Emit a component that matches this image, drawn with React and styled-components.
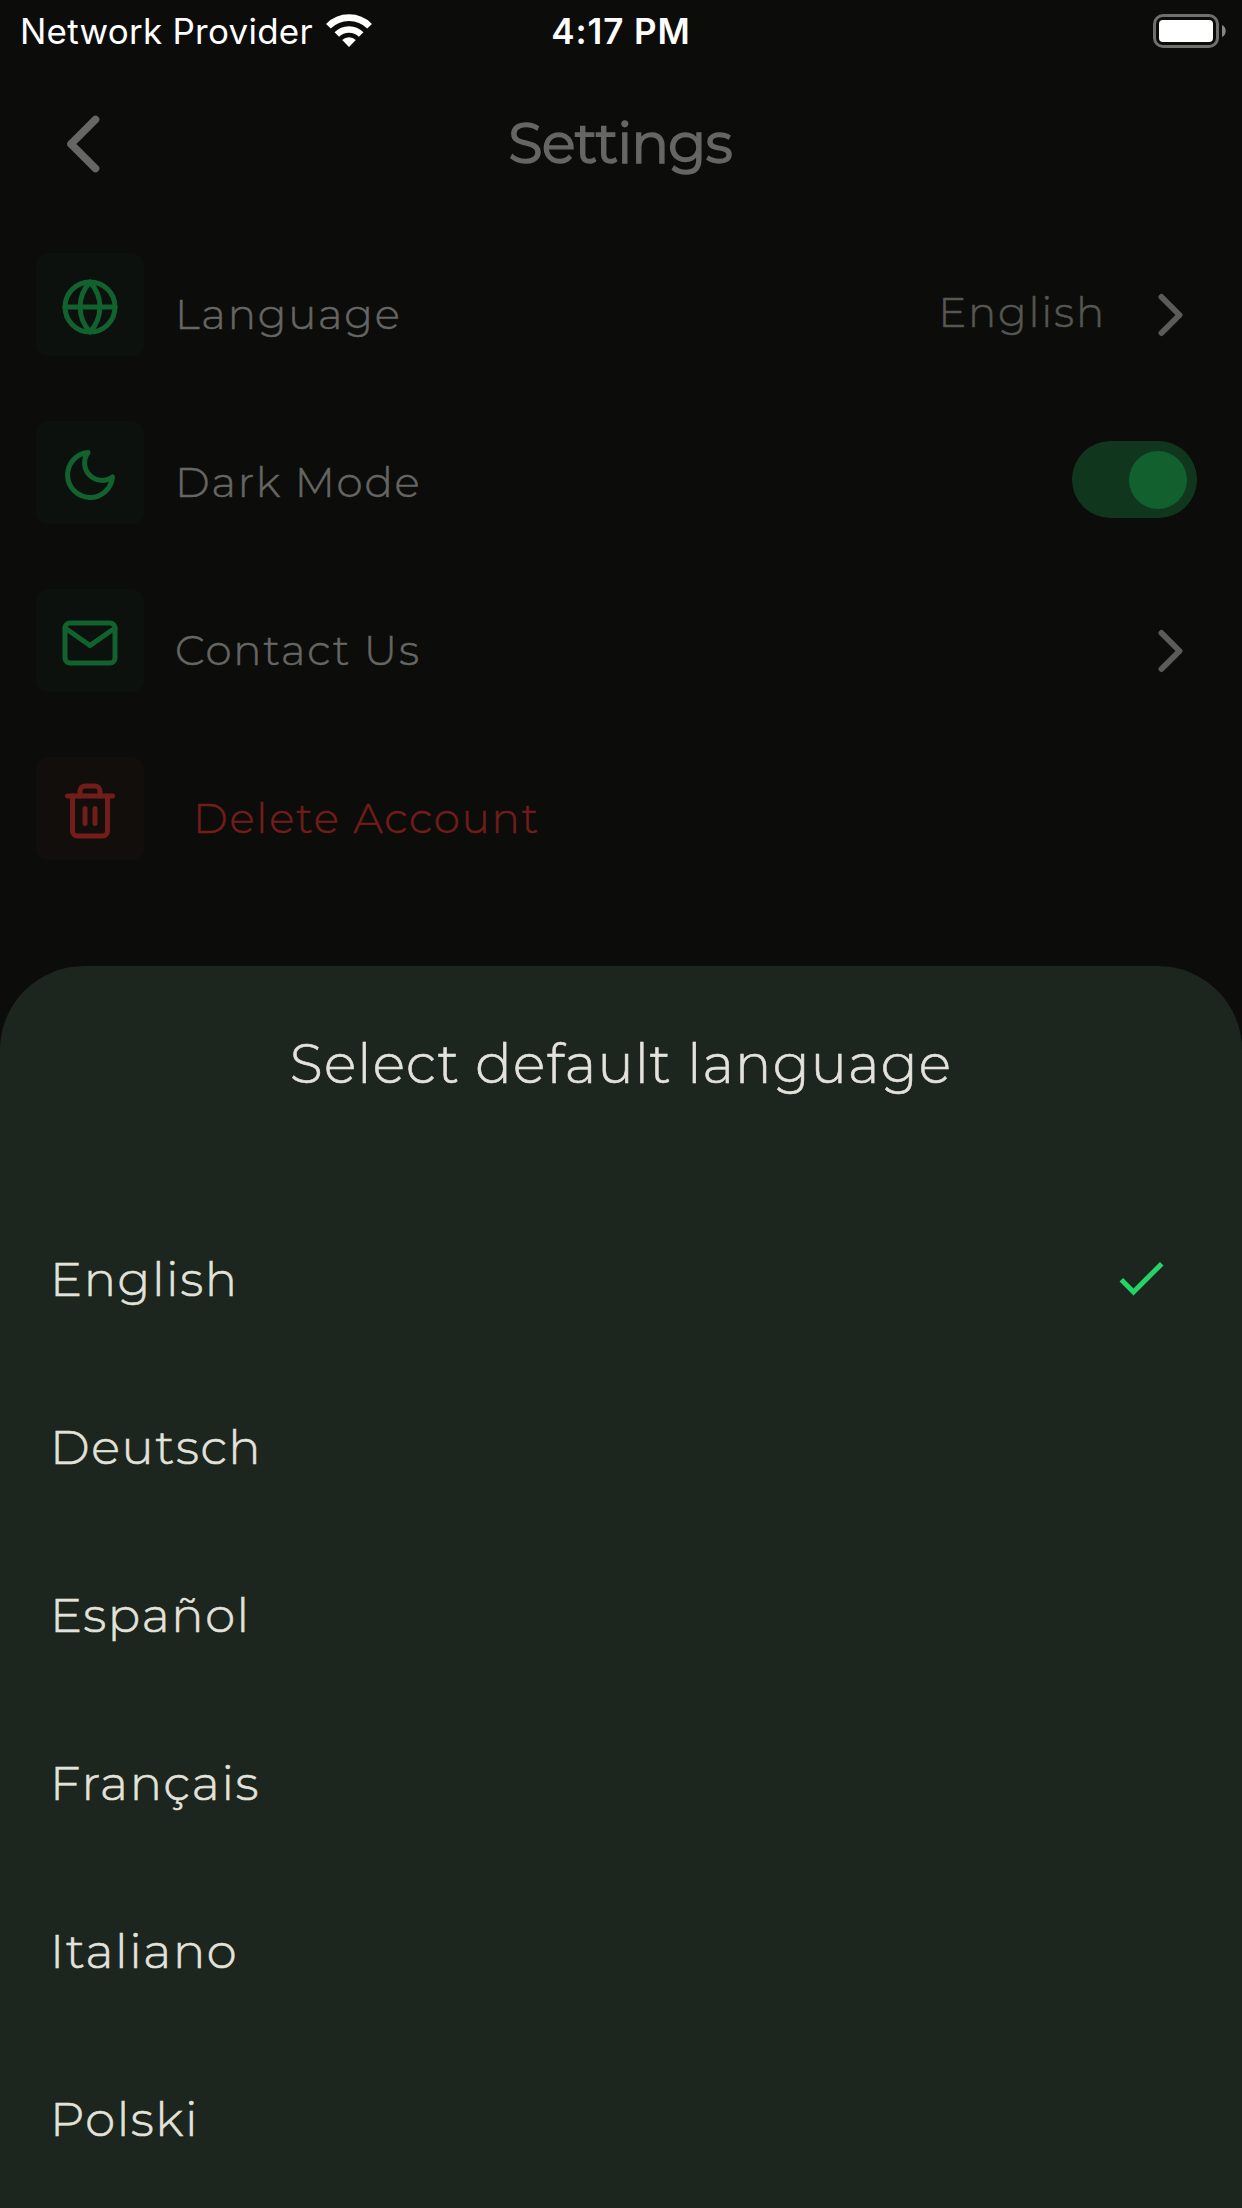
import React, { useState } from 'react';
import styled, { createGlobalStyle } from 'styled-components';
import { FiGlobe, FiMoon, FiMail, FiTrash2 } from 'react-icons/fi';
import { MdCheck } from 'react-icons/md';

const GlobalStyle = createGlobalStyle`
  * {
    margin: 0;
    padding: 0;
    box-sizing: border-box;
  }

  body {
    font-family: Montserrat, Inter, 'Open Sans', sans-serif;
    background: #0c0c0a;
  }

  button {
    background: none;
    border: none;
    font: inherit;
    color: inherit;
  }
`;

const Screen = styled.div`
  width: 1242px;
  height: 2208px;
  display: flex;
  flex-direction: column;
  overflow: hidden;
  background: #0c0c0a;
`;

const StatusBar = styled.div`
  height: 60px;
  display: grid;
  grid-template-columns: 1fr auto 1fr;
  align-items: center;
  padding: 2px 16px 0;
  color: white;
  font-family: Inter, sans-serif;
  font-size: 35px;
  line-height: 58px;
`;

const Carrier = styled.div`
  display: flex;
  align-items: center;
  gap: 13px;
  padding-left: 4px;
  letter-spacing: 0.25px;
`;

const Clock = styled.div`
  font-weight: 600;
  letter-spacing: 0.9px;
`;

const StatusIcons = styled.div`
  display: flex;
  justify-content: flex-end;
`;

const Header = styled.header`
  height: 168px;
  display: grid;
  grid-template-columns: 168px 1fr 168px;
  align-items: center;
  color: #666662;
`;

const BackButton = styled.button`
  height: 168px;
  display: flex;
  align-items: center;
  justify-content: center;
`;

const Title = styled.h1`
  padding: 0 2px 1px 0;
  font-size: 56px;
  font-weight: 400;
  letter-spacing: -1px;
  line-height: 1.4;
  text-align: center;
  -webkit-text-stroke: 1.4px currentColor;
`;

const SettingsList = styled.div`
  padding: 25px 36px 0;
`;

const SettingRow = styled.div`
  height: 168px;
  display: flex;
  align-items: flex-start;
  color: ${props => (props.$danger ? '#721d19' : '#666664')};
`;

const IconBox = styled.div`
  width: 108px;
  height: 103px;
  padding: 24px;
  border-radius: 12px;
  font-size: 60px;
  line-height: 0;
  color: ${props => (props.$danger ? '#721d19' : '#11622e')};
  background: ${props => (props.$danger ? '#120e0b' : '#0c110d')};
`;

const SettingLabel = styled.div`
  flex: 1;
  padding-left: ${props => (props.$danger ? 49 : 31)}px;
  font-size: 42px;
  font-weight: 300;
  letter-spacing: 1.8px;
  line-height: 122px;
  -webkit-text-stroke: 0.5px currentColor;
`;

const SettingValue = styled.div`
  margin-right: 51px;
  font-size: 42px;
  font-weight: 300;
  letter-spacing: 1.8px;
  line-height: 118px;
  color: #565753;
  -webkit-text-stroke: 0.5px currentColor;
`;

const ChevronWrap = styled.div`
  height: 124px;
  display: flex;
  align-items: center;
  margin-right: 23px;
`;

const Toggle = styled.button`
  width: 125px;
  height: 77px;
  display: flex;
  align-items: center;
  justify-content: ${props => (props.$on ? 'flex-end' : 'flex-start')};
  margin: 20px 9px 0 0;
  padding: 10px;
  border-radius: 39px;
  background: #10371e;
`;

const Knob = styled.span`
  width: 58px;
  height: 58px;
  border-radius: 50%;
  background: #11602d;
`;

const Sheet = styled.section`
  flex: none;
  height: 1242px;
  margin-top: 41px;
  border-radius: 84px 84px 0 0;
  background: #1c261e;
  color: #e3e3dc;
`;

const SheetTitle = styled.h2`
  padding-top: 48px;
  font-size: 54px;
  font-weight: 300;
  letter-spacing: 1.2px;
  line-height: 100px;
  text-align: center;
  -webkit-text-stroke: 0.6px currentColor;
`;

const Options = styled.ul`
  padding: 81px 50px 0;
  list-style: none;
`;

const Option = styled.li`
  height: 168px;
  display: flex;
  align-items: center;
  justify-content: space-between;
  font-size: 48px;
  font-weight: 300;
  letter-spacing: 1.6px;
  -webkit-text-stroke: 0.6px currentColor;
`;

const CheckMark = styled(MdCheck)`
  margin: 0 21px 2px 0;
  color: #25d366;
  font-size: 60px;
`;

const WifiIcon = () => (
  <svg width="46" height="34" viewBox="0 0 46 34">
    <g fill="none" stroke="white">
      <path d="M2.4 12.2a29 29 0 0 1 41.2 0" strokeWidth="6.6" />
      <path d="M10.8 20.6a17.2 17.2 0 0 1 24.4 0" strokeWidth="6.4" />
    </g>
    <path d="M23 33l-6.8-6.9a9.6 9.6 0 0 1 13.6 0z" fill="white" />
  </svg>
);

const BatteryIcon = () => (
  <svg width="73" height="34" viewBox="0 0 73 34">
    <rect x="1.5" y="1.5" width="63" height="31" rx="8.5" fill="none" stroke="#6f6f6e" strokeWidth="3" />
    <rect x="6" y="6" width="54" height="22" rx="4" fill="white" />
    <path d="M69 11c5 2 5 10 0 12z" fill="#858584" />
  </svg>
);

const BackIcon = () => (
  <svg width="34" height="58" viewBox="0 0 34 58" fill="none" stroke="currentColor" strokeWidth="7.6" strokeLinecap="round" strokeLinejoin="round">
    <path d="M28.5 4.5L4 29l24.5 24.5" />
  </svg>
);

const Chevron = () => (
  <ChevronWrap>
    <svg width="26" height="44" viewBox="0 0 26 44" fill="none" stroke="#5b5c57" strokeWidth="6" strokeLinecap="round" strokeLinejoin="round">
      <path d="M4.5 4l18 18-18 18" />
    </svg>
  </ChevronWrap>
);

const languages = ['English', 'Deutsch', 'Español', 'Français', 'Italiano', 'Polski'];

function App() {
  const [language, setLanguage] = useState('English');
  const [darkMode, setDarkMode] = useState(true);

  return (
    <>
      <GlobalStyle />
      <Screen>
        <StatusBar>
          <Carrier>
            <span>Network Provider</span>
            <WifiIcon />
          </Carrier>
          <Clock>4:17 PM</Clock>
          <StatusIcons>
            <BatteryIcon />
          </StatusIcons>
        </StatusBar>

        <Header>
          <BackButton aria-label="Back">
            <BackIcon />
          </BackButton>
          <Title>Settings</Title>
        </Header>

        <SettingsList>
          <SettingRow>
            <IconBox><FiGlobe /></IconBox>
            <SettingLabel>Language</SettingLabel>
            <SettingValue>{language}</SettingValue>
            <Chevron />
          </SettingRow>
          <SettingRow>
            <IconBox><FiMoon /></IconBox>
            <SettingLabel>Dark Mode</SettingLabel>
            <Toggle $on={darkMode} onClick={() => setDarkMode(!darkMode)}>
              <Knob />
            </Toggle>
          </SettingRow>
          <SettingRow>
            <IconBox><FiMail /></IconBox>
            <SettingLabel>Contact Us</SettingLabel>
            <Chevron />
          </SettingRow>
          <SettingRow $danger>
            <IconBox $danger><FiTrash2 /></IconBox>
            <SettingLabel $danger>Delete Account</SettingLabel>
          </SettingRow>
        </SettingsList>

        <Sheet>
          <SheetTitle>Select default language</SheetTitle>
          <Options>
            {languages.map((name) => (
              <Option key={name} onClick={() => setLanguage(name)}>
                {name}
                {name === language && <CheckMark />}
              </Option>
            ))}
          </Options>
        </Sheet>
      </Screen>
    </>
  );
}

export default App;
